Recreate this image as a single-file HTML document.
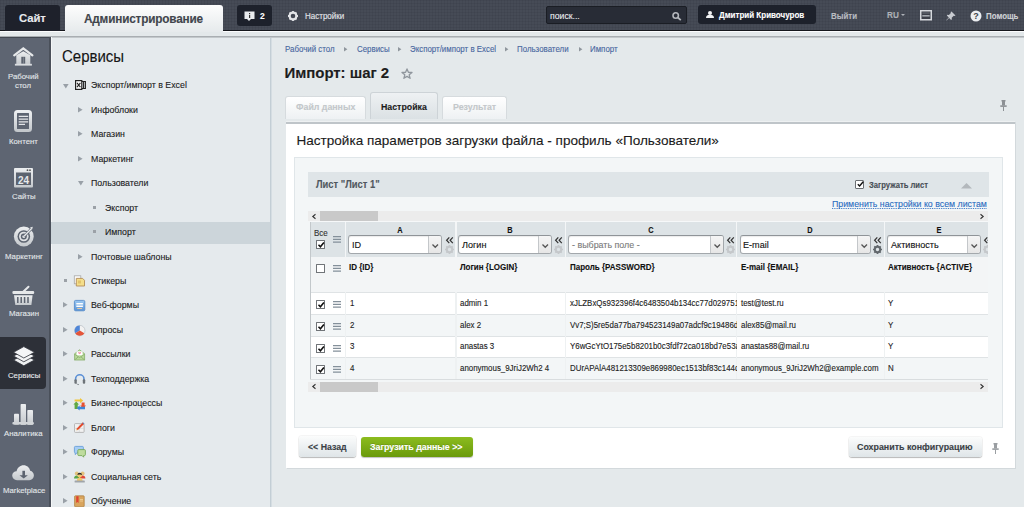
<!DOCTYPE html>
<html><head><meta charset="utf-8">
<style>
*{box-sizing:border-box;margin:0;padding:0}
html,body{width:1024px;height:507px;overflow:hidden;font-family:"Liberation Sans",sans-serif;background:#e4e9eb;position:relative}
.a{position:absolute}
.t{position:absolute;white-space:nowrap;-webkit-text-stroke:0.12px}
svg{overflow:visible}
</style></head><body>
<div class="a" style="left:0px;top:0px;width:1024px;height:31px;background:#464b56;border-bottom:1px solid #15171c"></div>
<div class="a" style="left:0px;top:0px;width:1024px;height:30px;background-image:linear-gradient(90deg,rgba(0,0,0,.05) 1px,transparent 1px),linear-gradient(rgba(0,0,0,.05) 1px,transparent 1px);background-size:3px 3px"></div>
<div class="a" style="left:0px;top:31px;width:1024px;height:1px;background:#fafbfc"></div>
<div class="a" style="left:0px;top:32px;width:1024px;height:4px;background:#e3e8ea"></div>
<div class="a" style="left:0px;top:36px;width:1024px;height:1px;background:#a9aeb2"></div>
<div class="a" style="left:0px;top:37px;width:1024px;height:1px;background:#c3c8cb"></div>
<div class="a" style="left:5px;top:5px;width:55px;height:26px;background:#1e212b;border-radius:3px 3px 0 0"></div>
<div class="t" style="left:18.50px;top:11.47px;font-size:11.75px;line-height:13.51px;font-weight:bold;color:#e8eaee;transform:scaleX(0.9615);transform-origin:0 0;letter-spacing:-0.1px">Сайт</div>
<div class="a" style="left:65px;top:5px;width:158px;height:27px;background:linear-gradient(#fdfdfd,#e6eaec);border-radius:3px 3px 0 0"></div>
<div class="t" style="left:84.00px;top:11.69px;font-size:12.27px;line-height:14.11px;font-weight:bold;color:#41454c;transform:scaleX(0.9615);transform-origin:0 0;letter-spacing:-0.2px">Администрирование</div>
<div class="a" style="left:237px;top:5px;width:35px;height:21px;background:#1d212b;border-radius:3px"></div>
<svg class="a" style="left:244px;top:11px" width="11" height="11" viewBox="0 0 11 11"><path d="M0.5 0.5h10v7.5h-3.5l-2 2-2-2h-2.5z" fill="#e9ebee"/><rect x="5" y="2" width="1.2" height="1.2" fill="#333"/><rect x="5" y="4" width="1.2" height="3" fill="#333"/></svg>
<div class="t" style="left:259.50px;top:10.73px;font-size:9.52px;line-height:10.95px;font-weight:bold;color:#fff;transform:scaleX(0.8929);transform-origin:0 0;">2</div>
<svg class="a" style="left:288px;top:11px" width="10" height="10" viewBox="0 0 10 10"><circle cx="5" cy="5" r="3.4" fill="none" stroke="#e3e5e8" stroke-width="2.2"/><g stroke="#e3e5e8" stroke-width="1.8"><path d="M5 0v2M5 8v2M0 5h2M8 5h2M1.5 1.5l1.4 1.4M7.1 7.1l1.4 1.4M1.5 8.5l1.4-1.4M7.1 2.9l1.4-1.4"/></g></svg>
<div class="t" style="left:304.50px;top:10.74px;font-size:8.96px;line-height:10.30px;font-weight:normal;color:#e6e8eb;transform:scaleX(0.8929);transform-origin:0 0;">Настройки</div>
<div class="a" style="left:546px;top:6px;width:141px;height:18px;background:#282c36;border:1px solid #1a1d24;border-radius:2px"></div>
<div class="t" style="left:550.00px;top:10.02px;font-size:9.74px;line-height:11.21px;font-weight:normal;color:#e9ebef;transform:scaleX(0.8929);transform-origin:0 0;">поиск...</div>
<svg class="a" style="left:672px;top:12px" width="10" height="8" viewBox="0 0 10 8"><circle cx="3.7" cy="3.5" r="2.7" fill="none" stroke="#b4b7bc" stroke-width="1.6"/><path d="M5.8 5.5l3 2.6" stroke="#b4b7bc" stroke-width="1.8"/></svg>
<div class="a" style="left:698px;top:5px;width:118px;height:19px;background:#1d212b;border-radius:3px"></div>
<svg class="a" style="left:706px;top:11px" width="8" height="7" viewBox="0 0 8 7"><circle cx="4" cy="2" r="2" fill="#f2f3f5"/><path d="M0 7c0-2.5 1.5-3.3 4-3.3s4 .8 4 3.3z" fill="#f2f3f5"/></svg>
<div class="t" style="left:719.00px;top:10.24px;font-size:8.96px;line-height:10.30px;font-weight:bold;color:#fff;transform:scaleX(0.8929);transform-origin:0 0;">Дмитрий Кривочуров</div>
<div class="t" style="left:831.00px;top:10.65px;font-size:8.85px;line-height:10.18px;font-weight:bold;color:#b9bcc1;transform:scaleX(0.8929);transform-origin:0 0;">Выйти</div>
<div class="t" style="left:887.00px;top:10.34px;font-size:9.18px;line-height:10.56px;font-weight:bold;color:#adb1b7;transform:scaleX(0.8929);transform-origin:0 0;">RU</div>
<svg class="a" style="left:901px;top:14px" width="4" height="2" viewBox="0 0 4 2"><path d="M0 0h4l-2 2z" fill="#adb1b7"/></svg>
<svg class="a" style="left:920px;top:10px" width="12" height="10.5" viewBox="0 0 12 10.5"><rect x="0.75" y="0.75" width="10.5" height="9" fill="#3b3f48" stroke="#d5d8dc" stroke-width="1.5"/><rect x="2.3" y="5" width="7.4" height="1.6" fill="#a3a8ae"/><rect x="2.3" y="2.5" width="7.4" height="1" fill="#6d727a"/></svg>
<svg class="a" style="left:946px;top:11px" width="10" height="9" viewBox="0 0 10 9"><path d="M5.5 0.5l4 4-1 .6-.8-.3-2 2 .2 1.4-.8.7-2-2L.5 9.5l-.3-.3 2.6-2.7-2-2 .7-.8 1.4.2 2-2-.3-.8z" fill="#c9ccd1"/></svg>
<svg class="a" style="left:970px;top:10px" width="12" height="12" viewBox="0 0 12 12"><circle cx="6" cy="6" r="5.5" fill="#eceef1"/><text x="6" y="9.2" font-family="Liberation Sans" font-weight="bold" font-size="9" text-anchor="middle" fill="#3f434b">?</text></svg>
<div class="t" style="left:985.50px;top:10.65px;font-size:8.85px;line-height:10.18px;font-weight:bold;color:#cfd2d6;transform:scaleX(0.8929);transform-origin:0 0;">Помощь</div>
<div class="a" style="left:0px;top:37px;width:50px;height:470px;background:#5e6572"></div>
<div class="a" style="left:0px;top:37px;width:50px;height:1px;background:#434952"></div>
<div class="a" style="left:49px;top:37px;width:2px;height:470px;background:#4a505a"></div>
<div class="a" style="left:51px;top:37px;width:1px;height:470px;background:#f4f6f7"></div>
<div class="a" style="left:0px;top:337px;width:46px;height:52px;background:#2d3038;border-radius:0 4px 4px 0"></div>
<svg class="a" style="left:13px;top:47px" width="21" height="19" viewBox="0 0 21 19"><defs><linearGradient id="lg" x1="0" y1="0" x2="0" y2="1"><stop offset="0" stop-color="#eceef0"/><stop offset="1" stop-color="#c4c8cc"/></linearGradient></defs><path d="M3.3 8.2L10.3 4.2 17.3 8.2V17.5H3.3Z" fill="url(#lg)"/><path d="M1.2 8.4L10.3 1.3 19.4 8.4" fill="none" stroke="#e6e8ea" stroke-width="2.2" stroke-linecap="round"/><rect x="8.3" y="9.8" width="3.9" height="7" fill="#5c636f"/><rect x="10" y="10.3" width="0.7" height="6.5" fill="#8a9099"/><rect x="1.9" y="16.8" width="17" height="1.8" fill="#d9dcdf"/></svg>
<div class="t" style="left:8.30px;top:72.32px;font-size:8.11px;line-height:9.33px;font-weight:normal;color:#e2e5e9;transform:scaleX(0.9615);transform-origin:0 0;">Рабочий</div>
<div class="t" style="left:15.00px;top:80.62px;font-size:8.11px;line-height:9.33px;font-weight:normal;color:#e2e5e9;transform:scaleX(0.9615);transform-origin:0 0;">стол</div>
<svg class="a" style="left:14px;top:110px" width="18" height="22" viewBox="0 0 18 22"><defs><linearGradient id="lg" x1="0" y1="0" x2="0" y2="1"><stop offset="0" stop-color="#eceef0"/><stop offset="1" stop-color="#c4c8cc"/></linearGradient></defs><rect x="1.5" y="1.5" width="15" height="19" rx="2" fill="none" stroke="url(#lg)" stroke-width="3"/><path d="M4.7 6.4h9.5M4.7 9.2h9.5M4.7 11.8h9.5M4.7 14.4h6.3" stroke="#e3e5e8" stroke-width="1.3"/></svg>
<div class="t" style="left:8.70px;top:136.52px;font-size:8.11px;line-height:9.33px;font-weight:normal;color:#e2e5e9;transform:scaleX(0.9615);transform-origin:0 0;">Контент</div>
<svg class="a" style="left:14px;top:167.5px" width="19" height="19.5" viewBox="0 0 19 19.5"><defs><linearGradient id="lg" x1="0" y1="0" x2="0" y2="1"><stop offset="0" stop-color="#eceef0"/><stop offset="1" stop-color="#c4c8cc"/></linearGradient></defs><rect x="0" y="0" width="19" height="19.5" rx="1" fill="url(#lg)"/><rect x="2" y="4.5" width="15" height="12.5" fill="#5c636f"/><circle cx="13.5" cy="2.2" r="0.9" fill="#555"/><circle cx="16" cy="2.2" r="0.9" fill="#555"/><text x="9.5" y="15.5" font-family="Liberation Sans" font-weight="bold" font-size="10" text-anchor="middle" fill="#e6e8ea">24</text></svg>
<div class="t" style="left:12.00px;top:191.72px;font-size:8.11px;line-height:9.33px;font-weight:normal;color:#e2e5e9;transform:scaleX(0.9615);transform-origin:0 0;">Сайты</div>
<svg class="a" style="left:13px;top:226px" width="22" height="21" viewBox="0 0 22 21"><defs><linearGradient id="lg" x1="0" y1="0" x2="0" y2="1"><stop offset="0" stop-color="#eceef0"/><stop offset="1" stop-color="#c4c8cc"/></linearGradient></defs><circle cx="10.8" cy="10.5" r="9.9" fill="url(#lg)"/><circle cx="10.8" cy="10.5" r="6.3" fill="#5c636f"/><circle cx="10.8" cy="10.5" r="4.8" fill="#dfe1e4"/><circle cx="10.8" cy="10.5" r="3" fill="#5c636f"/><circle cx="10.8" cy="10.5" r="1.5" fill="#dfe1e4"/><path d="M11 10.3L18.8 2.3" stroke="#5c636f" stroke-width="2.6"/><path d="M11 10.3L18.6 2.5" stroke="#e6e8ea" stroke-width="1.4"/><path d="M17 1.5l2.8-.8-.7 2.8z" fill="#e6e8ea"/></svg>
<div class="t" style="left:4.80px;top:252.02px;font-size:8.11px;line-height:9.33px;font-weight:normal;color:#e2e5e9;transform:scaleX(0.9615);transform-origin:0 0;">Маркетинг</div>
<svg class="a" style="left:12px;top:286px" width="23" height="20" viewBox="0 0 23 20"><defs><linearGradient id="lg" x1="0" y1="0" x2="0" y2="1"><stop offset="0" stop-color="#eceef0"/><stop offset="1" stop-color="#c4c8cc"/></linearGradient></defs><path d="M11.5 5.5L16.5 0.8" stroke="#e6e8ea" stroke-width="2" stroke-linecap="round"/><rect x="0.4" y="5" width="21.8" height="3" rx="1.2" fill="#e6e8ea"/><path d="M2 9.2H20.6L19.4 19H3.3Z" fill="url(#lg)"/><path d="M5.8 11v6M9.2 11v6M12.6 11v6M16 11v6" stroke="#5c636f" stroke-width="1.5"/></svg>
<div class="t" style="left:8.70px;top:309.32px;font-size:8.11px;line-height:9.33px;font-weight:normal;color:#e2e5e9;transform:scaleX(0.9615);transform-origin:0 0;">Магазин</div>
<svg class="a" style="left:13px;top:346px" width="22" height="20" viewBox="0 0 22 20"><path d="M0.5 14L10.8 8.5 21.5 14 10.8 19.8Z" fill="#eef0f2" stroke="#2d3038" stroke-width="0.8"/><path d="M0.5 10L10.8 4.5 21.5 10 10.8 15.8Z" fill="#f2f3f5" stroke="#2d3038" stroke-width="0.8"/><path d="M0.5 6.3L10.8 0.6 21.5 6.3 10.8 12Z" fill="#f4f5f7" stroke="#2d3038" stroke-width="0.8"/></svg>
<div class="t" style="left:7.60px;top:370.92px;font-size:8.11px;line-height:9.33px;font-weight:normal;color:#e8eaee;transform:scaleX(0.9615);transform-origin:0 0;">Сервисы</div>
<svg class="a" style="left:12px;top:403px" width="22" height="22" viewBox="0 0 22 22"><defs><linearGradient id="lg" x1="0" y1="0" x2="0" y2="1"><stop offset="0" stop-color="#eceef0"/><stop offset="1" stop-color="#c4c8cc"/></linearGradient></defs><rect x="2" y="10.8" width="5" height="11" rx="0.8" fill="url(#lg)"/><rect x="8.6" y="1" width="5.4" height="21" rx="0.8" fill="url(#lg)"/><rect x="15.3" y="7" width="5.7" height="15" rx="0.8" fill="url(#lg)"/><rect x="0.4" y="19" width="21.5" height="2.6" rx="1" fill="#d2d5d8"/></svg>
<div class="t" style="left:3.90px;top:429.42px;font-size:8.11px;line-height:9.33px;font-weight:normal;color:#e2e5e9;transform:scaleX(0.9615);transform-origin:0 0;">Аналитика</div>
<svg class="a" style="left:12px;top:465px" width="22" height="16" viewBox="0 0 22 16"><defs><linearGradient id="lg" x1="0" y1="0" x2="0" y2="1"><stop offset="0" stop-color="#eceef0"/><stop offset="1" stop-color="#c4c8cc"/></linearGradient></defs><path d="M5 15.2C2.2 15.2 0.2 13.2 0.2 10.6 0.2 8 2.2 6.2 4.6 6.2 5.3 2.6 8.2 0.2 11.6 0.2 15 0.2 17.6 2.6 18.2 5.8 20.3 6.3 21.9 8.2 21.9 10.6 21.9 13.2 19.9 15.2 17.3 15.2Z" fill="url(#lg)"/><rect x="10.4" y="5.8" width="2.6" height="5.5" fill="#5c636f"/><path d="M7.5 10.2H15.9L11.7 13.6Z" fill="#5c636f"/></svg>
<div class="t" style="left:2.60px;top:486.32px;font-size:8.11px;line-height:9.33px;font-weight:normal;color:#e2e5e9;transform:scaleX(0.9615);transform-origin:0 0;">Marketplace</div>
<div class="a" style="left:52px;top:38px;width:218px;height:469px;background:#e5eaed"></div>
<div class="a" style="left:270px;top:38px;width:1px;height:469px;background:#c3ced5"></div>
<div class="a" style="left:271px;top:38px;width:1px;height:469px;background:#d5dde2"></div>
<div class="t" style="left:61.50px;top:46.67px;font-size:16.20px;line-height:18.63px;font-weight:normal;color:#151515;transform:scaleX(0.9259);transform-origin:0 0;">Сервисы</div>
<svg class="a" style="left:63px;top:84.39999999999999px" width="6" height="5" viewBox="0 0 6 5"><path d="M0 0H5.6L2.8 4.6Z" fill="#99a0a7"/></svg>
<svg class="a" style="left:75px;top:80px" width="11" height="10" viewBox="0 0 11 10"><rect x="0.6" y="0.6" width="6.2" height="8.8" fill="#fff" stroke="#222" stroke-width="1.2"/><path d="M2 2.8l3.4 4.4M5.4 2.8L2 7.2" stroke="#222" stroke-width="1.1"/><path d="M6.8 1.5h3.6v7h-3.6M8.6 1.5v7" fill="none" stroke="#222" stroke-width="1.1"/></svg>
<div class="t" style="left:91.00px;top:79.32px;font-size:9.86px;line-height:11.33px;font-weight:normal;color:#1b1b1b;transform:scaleX(0.8929);transform-origin:0 0;">Экспорт/импорт в Excel</div>
<svg class="a" style="left:78px;top:106.76px" width="5" height="6" viewBox="0 0 5 6"><path d="M0 0L4.6 2.8 0 5.6Z" fill="#99a0a7"/></svg>
<div class="t" style="left:90.50px;top:103.78px;font-size:9.86px;line-height:11.33px;font-weight:normal;color:#1b1b1b;transform:scaleX(0.8929);transform-origin:0 0;">Инфоблоки</div>
<svg class="a" style="left:78px;top:131.21999999999997px" width="5" height="6" viewBox="0 0 5 6"><path d="M0 0L4.6 2.8 0 5.6Z" fill="#99a0a7"/></svg>
<div class="t" style="left:90.50px;top:128.24px;font-size:9.86px;line-height:11.33px;font-weight:normal;color:#1b1b1b;transform:scaleX(0.8929);transform-origin:0 0;">Магазин</div>
<svg class="a" style="left:78px;top:155.67999999999998px" width="5" height="6" viewBox="0 0 5 6"><path d="M0 0L4.6 2.8 0 5.6Z" fill="#99a0a7"/></svg>
<div class="t" style="left:90.50px;top:152.70px;font-size:9.86px;line-height:11.33px;font-weight:normal;color:#1b1b1b;transform:scaleX(0.8929);transform-origin:0 0;">Маркетинг</div>
<svg class="a" style="left:77.8px;top:181.44px" width="6" height="5" viewBox="0 0 6 5"><path d="M0 0H5.6L2.8 4.6Z" fill="#99a0a7"/></svg>
<div class="t" style="left:90.50px;top:177.16px;font-size:9.86px;line-height:11.33px;font-weight:normal;color:#1b1b1b;transform:scaleX(0.8929);transform-origin:0 0;">Пользователи</div>
<div class="a" style="left:51px;top:222px;width:219px;height:22px;background:#ccd5da"></div>
<div class="a" style="left:92.6px;top:206px;width:3px;height:3px;background:#9ba1a7"></div>
<div class="t" style="left:104.70px;top:201.62px;font-size:9.86px;line-height:11.33px;font-weight:normal;color:#1b1b1b;transform:scaleX(0.8929);transform-origin:0 0;">Экспорт</div>
<div class="a" style="left:92.6px;top:230px;width:3px;height:3px;background:#9ba1a7"></div>
<div class="t" style="left:104.70px;top:226.08px;font-size:9.86px;line-height:11.33px;font-weight:normal;color:#1b1b1b;transform:scaleX(0.8929);transform-origin:0 0;">Импорт</div>
<svg class="a" style="left:78px;top:253.51999999999998px" width="5" height="6" viewBox="0 0 5 6"><path d="M0 0L4.6 2.8 0 5.6Z" fill="#99a0a7"/></svg>
<div class="t" style="left:90.50px;top:250.54px;font-size:9.86px;line-height:11.33px;font-weight:normal;color:#1b1b1b;transform:scaleX(0.8929);transform-origin:0 0;">Почтовые шаблоны</div>
<div class="a" style="left:63.8px;top:279px;width:3px;height:3px;background:#9ba1a7"></div>
<svg class="a" style="left:74px;top:275px" width="12" height="12" viewBox="0 0 12 12"><rect x="0.3" y="0.8" width="6.5" height="8" fill="#fafafa" stroke="#a8a8a8" stroke-width="0.8"/><path d="M2.3 3.4H8.6L10.5 5.3V11H2.3Z" fill="#f4de8a" stroke="#b38d58" stroke-width="0.9"/><rect x="4" y="5.5" width="3" height="3" fill="#e2c36a"/></svg>
<div class="t" style="left:91.00px;top:275.00px;font-size:9.86px;line-height:11.33px;font-weight:normal;color:#1b1b1b;transform:scaleX(0.8929);transform-origin:0 0;">Стикеры</div>
<svg class="a" style="left:63.3px;top:302.44px" width="5" height="6" viewBox="0 0 5 6"><path d="M0 0L4.6 2.8 0 5.6Z" fill="#99a0a7"/></svg>
<svg class="a" style="left:74px;top:300px" width="12" height="12" viewBox="0 0 12 12"><defs><linearGradient id="gb" x1="0" y1="0" x2="0" y2="1"><stop offset="0" stop-color="#9cc9f2"/><stop offset="1" stop-color="#5b94d6"/></linearGradient></defs><rect x="0.4" y="0.4" width="10.4" height="10.4" rx="1.2" fill="url(#gb)" stroke="#4f86c6" stroke-width="0.8"/><rect x="2.3" y="3" width="6.6" height="1.5" fill="#fff"/><rect x="2.3" y="5.5" width="6.6" height="1.5" fill="#fff"/><rect x="3.2" y="8" width="4.8" height="1" fill="#e8c9a0"/></svg>
<div class="t" style="left:91.00px;top:299.46px;font-size:9.86px;line-height:11.33px;font-weight:normal;color:#1b1b1b;transform:scaleX(0.8929);transform-origin:0 0;">Веб-формы</div>
<svg class="a" style="left:63.3px;top:326.90000000000003px" width="5" height="6" viewBox="0 0 5 6"><path d="M0 0L4.6 2.8 0 5.6Z" fill="#99a0a7"/></svg>
<svg class="a" style="left:74px;top:324px" width="12" height="12" viewBox="0 0 12 12"><circle cx="5.8" cy="6.6" r="5.2" fill="#f2f2f2" stroke="#b9bec3" stroke-width="0.7"/><path d="M5.8 6.6V1.4A5.2 5.2 0 0 0 1.3 9.2Z" fill="#4f86d8"/><path d="M5.8 6.6L1.3 9.2A5.2 5.2 0 0 0 10.3 9.2Z" fill="#e4553a"/></svg>
<div class="t" style="left:91.00px;top:323.92px;font-size:9.86px;line-height:11.33px;font-weight:normal;color:#1b1b1b;transform:scaleX(0.8929);transform-origin:0 0;">Опросы</div>
<svg class="a" style="left:63.3px;top:351.35999999999996px" width="5" height="6" viewBox="0 0 5 6"><path d="M0 0L4.6 2.8 0 5.6Z" fill="#99a0a7"/></svg>
<svg class="a" style="left:74px;top:349px" width="12" height="12" viewBox="0 0 12 12"><path d="M0.6 4.8L5.6 0.8 10.6 4.8V11H0.6Z" fill="#b9d99b" stroke="#86ad68" stroke-width="0.8"/><rect x="2.6" y="2.3" width="6" height="4" fill="#fff"/><path d="M4.2 3.3c.6-.6 1.4-.3 1.4.3 0-.6.8-.9 1.4-.3.5.6-.4 1.4-1.4 2-1-.6-1.9-1.4-1.4-2z" fill="#f19bb0"/><path d="M0.6 5.2L5.6 8.6 10.6 5.2M0.6 11L4.3 7.8M10.6 11L6.9 7.8" fill="none" stroke="#86ad68" stroke-width="0.8"/></svg>
<div class="t" style="left:91.00px;top:348.38px;font-size:9.86px;line-height:11.33px;font-weight:normal;color:#1b1b1b;transform:scaleX(0.8929);transform-origin:0 0;">Рассылки</div>
<svg class="a" style="left:63.3px;top:375.82px" width="5" height="6" viewBox="0 0 5 6"><path d="M0 0L4.6 2.8 0 5.6Z" fill="#99a0a7"/></svg>
<svg class="a" style="left:74px;top:373px" width="12" height="12" viewBox="0 0 12 12"><path d="M1.6 7.5V6A4.2 4.2 0 0 1 10 6V7.5" fill="none" stroke="#5a8fd6" stroke-width="1.6"/><rect x="0.4" y="6.2" width="2.4" height="4.6" rx="1" fill="#6d7378"/><rect x="8.8" y="6.2" width="2.4" height="4.6" rx="1" fill="#6d7378"/><path d="M2.4 10.5Q3.5 11.8 5 11.6" fill="none" stroke="#6d7378" stroke-width="0.7"/></svg>
<div class="t" style="left:91.00px;top:372.84px;font-size:9.86px;line-height:11.33px;font-weight:normal;color:#1b1b1b;transform:scaleX(0.8929);transform-origin:0 0;">Техподдержка</div>
<svg class="a" style="left:63.3px;top:400.28000000000003px" width="5" height="6" viewBox="0 0 5 6"><path d="M0 0L4.6 2.8 0 5.6Z" fill="#99a0a7"/></svg>
<svg class="a" style="left:74px;top:398px" width="12" height="12" viewBox="0 0 12 12"><path d="M0.6 1.6H6V0L9.2 2.6 6 5.2V3.6H0.6Z" fill="#f2c53a"/><path d="M7.6 4.4H10.6V7.6H12L9.1 10.8 6.2 7.6H7.6Z" fill="#e8502f"/><path d="M0.6 11V6.4H-0.6L2.2 3.4 5 6.4H3.8V11Z" fill="#5fa844"/><path d="M11 11.2H5.6V12.6L2.6 10 5.6 7.4V8.8H11Z" fill="#3e86d8"/></svg>
<div class="t" style="left:91.00px;top:397.30px;font-size:9.86px;line-height:11.33px;font-weight:normal;color:#1b1b1b;transform:scaleX(0.8929);transform-origin:0 0;">Бизнес-процессы</div>
<svg class="a" style="left:63.3px;top:424.73999999999995px" width="5" height="6" viewBox="0 0 5 6"><path d="M0 0L4.6 2.8 0 5.6Z" fill="#99a0a7"/></svg>
<svg class="a" style="left:74px;top:422px" width="12" height="12" viewBox="0 0 12 12"><rect x="0.5" y="1.6" width="9.6" height="8.8" rx="0.8" fill="#f1f1f1" stroke="#a9a9a9" stroke-width="0.8"/><path d="M5.3 1.6V10.4M0.5 6.4H10.1" stroke="#d0d0d0" stroke-width="0.6"/><path d="M3 7.6L9.6 1" stroke="#e24a2c" stroke-width="2"/><path d="M9 0.4l1.4 1.2-0.7 0.7-1.3-1.2z" fill="#4b8fd8"/><path d="M2.2 8.4l0.6-1.4 0.9 0.8z" fill="#f0c040"/></svg>
<div class="t" style="left:91.00px;top:421.76px;font-size:9.86px;line-height:11.33px;font-weight:normal;color:#1b1b1b;transform:scaleX(0.8929);transform-origin:0 0;">Блоги</div>
<svg class="a" style="left:63.3px;top:449.2px" width="5" height="6" viewBox="0 0 5 6"><path d="M0 0L4.6 2.8 0 5.6Z" fill="#99a0a7"/></svg>
<svg class="a" style="left:74px;top:446px" width="12" height="12" viewBox="0 0 12 12"><path d="M1.4 0.4H8.4A1 1 0 0 1 9.4 1.4V5.8A1 1 0 0 1 8.4 6.8H3L1.2 8.6V6.8A1 1 0 0 1 0.4 5.8V1.4A1 1 0 0 1 1.4 0.4Z" fill="#a6cdf4" stroke="#5d97d6" stroke-width="0.8"/><path d="M4.8 3.6H10.4A1 1 0 0 1 11.4 4.6V8.6A1 1 0 0 1 10.4 9.6H9.6V11.2L8 9.6H4.8A1 1 0 0 1 3.8 8.6V4.6A1 1 0 0 1 4.8 3.6Z" fill="#bfdc9e" stroke="#6ea34e" stroke-width="0.8"/></svg>
<div class="t" style="left:91.00px;top:446.22px;font-size:9.86px;line-height:11.33px;font-weight:normal;color:#1b1b1b;transform:scaleX(0.8929);transform-origin:0 0;">Форумы</div>
<svg class="a" style="left:63.3px;top:473.66px" width="5" height="6" viewBox="0 0 5 6"><path d="M0 0L4.6 2.8 0 5.6Z" fill="#99a0a7"/></svg>
<svg class="a" style="left:74px;top:471px" width="12" height="12" viewBox="0 0 12 12"><circle cx="2.8" cy="2.4" r="2" fill="#e3c27e"/><circle cx="8.6" cy="2.4" r="2" fill="#e3c27e"/><path d="M0 7.5c0-2 1.2-3 2.8-3s2.8 1 2.8 3z" fill="#5aa447"/><path d="M5.8 7.5c0-2 1.2-3 2.8-3s2.8 1 2.8 3z" fill="#e04a3a"/><circle cx="5.7" cy="4.3" r="2.3" fill="#f2c86e"/><path d="M3.4 4.1a2.3 2.3 0 0 1 4.6 0c-.8-.9-3.8-.9-4.6 0z" fill="#2e2e2e"/><path d="M2.8 10c0-2.4 1.2-3.3 2.9-3.3s2.9.9 2.9 3.3z" fill="#f2c86e"/><rect x="0.6" y="9.4" width="10.2" height="2.2" rx="0.6" fill="#a0a5aa"/></svg>
<div class="t" style="left:91.00px;top:470.68px;font-size:9.86px;line-height:11.33px;font-weight:normal;color:#1b1b1b;transform:scaleX(0.8929);transform-origin:0 0;">Социальная сеть</div>
<svg class="a" style="left:63.3px;top:498.11999999999995px" width="5" height="6" viewBox="0 0 5 6"><path d="M0 0L4.6 2.8 0 5.6Z" fill="#99a0a7"/></svg>
<svg class="a" style="left:74px;top:495px" width="12" height="12" viewBox="0 0 12 12"><rect x="0.6" y="0.8" width="9.6" height="11" rx="0.8" fill="#d9a55e" stroke="#a9783a" stroke-width="0.7"/><path d="M2.2 1.2V8l1.2-1 1.2 1V1.2z" fill="#e0432f"/><path d="M6 4.5h3M6 6h3" stroke="#f3d29b" stroke-width="0.8"/></svg>
<div class="t" style="left:91.00px;top:495.14px;font-size:9.86px;line-height:11.33px;font-weight:normal;color:#1b1b1b;transform:scaleX(0.8929);transform-origin:0 0;">Обучение</div>
<div class="a" style="left:272px;top:38px;width:752px;height:469px;background:#e4e9eb"></div>
<div class="t" style="left:285.00px;top:43.85px;font-size:8.85px;line-height:10.18px;font-weight:normal;color:#4867a0;transform:scaleX(0.8929);transform-origin:0 0;">Рабочий стол</div>
<svg class="a" style="left:344px;top:47.0px" width="4" height="5" viewBox="0 0 4 5"><path d="M0 0L3.4 2.2 0 4.4Z" fill="#8f969d"/></svg>
<div class="t" style="left:356.60px;top:43.85px;font-size:8.85px;line-height:10.18px;font-weight:normal;color:#4867a0;transform:scaleX(0.8929);transform-origin:0 0;">Сервисы</div>
<svg class="a" style="left:398px;top:47.0px" width="4" height="5" viewBox="0 0 4 5"><path d="M0 0L3.4 2.2 0 4.4Z" fill="#8f969d"/></svg>
<div class="t" style="left:410.30px;top:43.85px;font-size:8.85px;line-height:10.18px;font-weight:normal;color:#4867a0;transform:scaleX(0.8929);transform-origin:0 0;">Экспорт/импорт в Excel</div>
<svg class="a" style="left:505.3px;top:47.0px" width="4" height="5" viewBox="0 0 4 5"><path d="M0 0L3.4 2.2 0 4.4Z" fill="#8f969d"/></svg>
<div class="t" style="left:516.70px;top:43.85px;font-size:8.85px;line-height:10.18px;font-weight:normal;color:#4867a0;transform:scaleX(0.8929);transform-origin:0 0;">Пользователи</div>
<svg class="a" style="left:578.5px;top:47.0px" width="4" height="5" viewBox="0 0 4 5"><path d="M0 0L3.4 2.2 0 4.4Z" fill="#8f969d"/></svg>
<div class="t" style="left:589.90px;top:43.85px;font-size:8.85px;line-height:10.18px;font-weight:normal;color:#4867a0;transform:scaleX(0.8929);transform-origin:0 0;">Импорт</div>
<div class="t" style="left:284.50px;top:64.38px;font-size:15.00px;line-height:17.25px;font-weight:bold;color:#1d1d1d;letter-spacing:-0.05px">Импорт: шаг 2</div>
<svg class="a" style="left:401px;top:68px" width="12" height="11" viewBox="0 0 12 11"><path d="M6 0.9L7.4 4.3 11 4.5 8.2 6.8 9.1 10.3 6 8.4 2.9 10.3 3.8 6.8 1 4.5 4.6 4.3Z" fill="none" stroke="#8f969d" stroke-width="1.3" stroke-linejoin="round"/></svg>
<svg class="a" style="left:1000px;top:100px" width="7" height="11" viewBox="0 0 7 11"><rect x="1.5" y="0" width="4" height="1.5" fill="#8c9094"/><rect x="2" y="1" width="3" height="4.5" fill="#8c9094"/><rect x="0.3" y="5.3" width="6.4" height="1.6" fill="#8c9094"/><rect x="3" y="6.5" width="1" height="4.5" fill="#8c9094"/></svg>
<div class="a" style="left:285px;top:96px;width:81px;height:23px;background:linear-gradient(#ffffff,#eef1f3);border:1px solid #d6dbde;border-bottom:none;border-radius:3px 3px 0 0"></div>
<div class="t" style="left:296.00px;top:101.12px;font-size:9.86px;line-height:11.33px;font-weight:bold;color:#c3c7ca;transform:scaleX(0.8929);transform-origin:0 0;">Файл данных</div>
<div class="a" style="left:370px;top:92px;width:68px;height:27px;background:linear-gradient(#eef1f3,#dbe1e4);border:1px solid #cdd3d7;border-bottom:none;border-radius:3px 3px 0 0"></div>
<div class="t" style="left:380.50px;top:101.12px;font-size:9.86px;line-height:11.33px;font-weight:bold;color:#1b1b1b;transform:scaleX(0.8929);transform-origin:0 0;">Настройка</div>
<div class="a" style="left:442px;top:96px;width:65px;height:23px;background:linear-gradient(#ffffff,#eef1f3);border:1px solid #d6dbde;border-bottom:none;border-radius:3px 3px 0 0"></div>
<div class="t" style="left:452.50px;top:101.12px;font-size:9.86px;line-height:11.33px;font-weight:bold;color:#c3c7ca;transform:scaleX(0.8929);transform-origin:0 0;">Результат</div>
<div class="a" style="left:286px;top:121px;width:729px;height:347px;background:#fff;border-top:3px solid #bfc5c9;box-shadow:1px 1px 0 #d3d9dc"></div>
<div class="a" style="left:286px;top:121px;width:729px;height:1px;background:#eef1f2"></div>
<div class="t" style="left:296.50px;top:133.01px;font-size:13.55px;line-height:15.58px;font-weight:normal;color:#1b1b1b;">Настройка параметров загрузки файла - профиль «Пользователи»</div>
<div class="a" style="left:294px;top:157px;width:709px;height:271px;background:#f3f6f7;border:1px solid #e0e6e9"></div>
<div class="a" style="left:308px;top:172px;width:681px;height:25px;background:#dfe5e8"></div>
<div class="t" style="left:316.00px;top:177.90px;font-size:10.53px;line-height:12.11px;font-weight:bold;color:#50575e;transform:scaleX(0.8929);transform-origin:0 0;">Лист "Лист 1"</div>
<div class="a" style="left:855px;top:179.5px;width:9px;height:9px;background:#fff;border:1px solid #6b6f73;border-radius:1px"></div>
<svg class="a" style="left:856.5px;top:181px" width="7" height="6" viewBox="0 0 7 6"><path d="M0.8 3.2L2.6 5 6.2 0.8" fill="none" stroke="#111" stroke-width="1.4"/></svg>
<div class="t" style="left:868.80px;top:180.90px;font-size:8.57px;line-height:9.85px;font-weight:bold;color:#474e55;transform:scaleX(0.8929);transform-origin:0 0;">Загружать лист</div>
<svg class="a" style="left:961px;top:183px" width="11" height="5.5" viewBox="0 0 11 5.5"><path d="M0 5.5L5.5 0 11 5.5Z" fill="#b3b8bc"/></svg>
<div class="t" style="left:832.40px;top:198.72px;font-size:9.86px;line-height:11.33px;font-weight:normal;color:#2a6bc0;transform:scaleX(0.8929);transform-origin:0 0;border-bottom:1px dotted #2a6bc0;line-height:9px">Применить настройки ко всем листам</div>
<div class="a" style="left:308px;top:211px;width:680px;height:10px;background:#ececec"></div>
<div class="a" style="left:320px;top:211px;width:58px;height:10px;background:#c9c9c9"></div>
<svg class="a" style="left:311.5px;top:213.5px" width="4" height="5" viewBox="0 0 4 5"><path d="M3.5 0.3L0.8 2.5 3.5 4.7" fill="none" stroke="#333" stroke-width="1.1"/></svg>
<svg class="a" style="left:980px;top:213.5px" width="4" height="5" viewBox="0 0 4 5"><path d="M0.5 0.3L3.2 2.5 0.5 4.7" fill="none" stroke="#333" stroke-width="1.1"/></svg>
<div class="a" style="left:308px;top:381.5px;width:680px;height:10px;background:#ececec"></div>
<div class="a" style="left:320px;top:381.5px;width:58px;height:10px;background:#c9c9c9"></div>
<svg class="a" style="left:311.5px;top:384.0px" width="4" height="5" viewBox="0 0 4 5"><path d="M3.5 0.3L0.8 2.5 3.5 4.7" fill="none" stroke="#333" stroke-width="1.1"/></svg>
<svg class="a" style="left:980px;top:384.0px" width="4" height="5" viewBox="0 0 4 5"><path d="M0.5 0.3L3.2 2.5 0.5 4.7" fill="none" stroke="#333" stroke-width="1.1"/></svg>
<div class="a" style="left:310px;top:221px;width:678px;height:1px;background:#f6f8f9"></div>
<div class="a" style="left:310px;top:222px;width:678px;height:35px;background:#dde3e6"></div>
<div class="a" style="left:310px;top:257px;width:678px;height:35px;background:#f3f5f6"></div>
<div class="a" style="left:310px;top:292px;width:678px;height:22px;background:#ffffff;border-top:1.5px solid #dfe3e5"></div>
<div class="a" style="left:310px;top:314px;width:678px;height:21.5px;background:#f3f6f7;border-top:1.5px solid #dfe3e5"></div>
<div class="a" style="left:310px;top:335.5px;width:678px;height:21.5px;background:#ffffff;border-top:1.5px solid #dfe3e5"></div>
<div class="a" style="left:310px;top:357px;width:678px;height:21.5px;background:#f3f6f7;border-top:1.5px solid #dfe3e5"></div>
<div class="a" style="left:310px;top:378.5px;width:678px;height:1px;background:#d9dddf"></div>
<div class="a" style="left:310px;top:222px;width:1px;height:157px;background:#c3c8cb"></div>
<div class="a" style="left:344.5px;top:222px;width:1.5px;height:35px;background:#f4f6f7"></div>
<div class="a" style="left:344.5px;top:292px;width:1.5px;height:87px;background:#eef1f2"></div>
<div class="a" style="left:455.0px;top:222px;width:1.5px;height:35px;background:#f4f6f7"></div>
<div class="a" style="left:455.0px;top:292px;width:1.5px;height:87px;background:#eef1f2"></div>
<div class="a" style="left:564.5px;top:222px;width:1.5px;height:35px;background:#f4f6f7"></div>
<div class="a" style="left:564.5px;top:292px;width:1.5px;height:87px;background:#eef1f2"></div>
<div class="a" style="left:735.5px;top:222px;width:1.5px;height:35px;background:#f4f6f7"></div>
<div class="a" style="left:735.5px;top:292px;width:1.5px;height:87px;background:#eef1f2"></div>
<div class="a" style="left:883.5px;top:222px;width:1.5px;height:35px;background:#f4f6f7"></div>
<div class="a" style="left:883.5px;top:292px;width:1.5px;height:87px;background:#eef1f2"></div>
<div class="t" style="left:313.80px;top:228.24px;font-size:8.96px;line-height:10.30px;font-weight:normal;color:#333;transform:scaleX(0.8929);transform-origin:0 0;">Все</div>
<div class="a" style="left:316.3px;top:240px;width:9px;height:9px;background:#fff;border:1px solid #707478;border-radius:0.5px"></div>
<svg class="a" style="left:317.90000000000003px;top:242px" width="6.5" height="5.5" viewBox="0 0 6.5 5.5"><path d="M0.5 2.8L2.4 4.7 5.9 0.6" fill="none" stroke="#111" stroke-width="1.6"/></svg>
<svg class="a" style="left:333px;top:235.5px" width="8" height="7" viewBox="0 0 8 7"><path d="M0 0.6h8M0 3.3h8M0 6h8" stroke="#84909a" stroke-width="1.25"/></svg>
<div class="a" style="left:316.3px;top:264px;width:9px;height:9px;background:#fff;border:1px solid #707478;border-radius:0.5px"></div>
<svg class="a" style="left:333px;top:264.5px" width="8" height="7" viewBox="0 0 8 7"><path d="M0 0.6h8M0 3.3h8M0 6h8" stroke="#84909a" stroke-width="1.25"/></svg>
<div class="a" style="left:310px;top:222px;width:678px;height:35px;overflow:hidden">
<div class="t" style="left:-9.60px;width:200px;text-align:center;top:3.86px;font-size:8.29px;line-height:9.53px;font-weight:bold;color:#111;transform:scaleX(0.8929);">A</div>
<div class="a" style="left:38.19999999999999px;top:13px;width:94.19999999999999px;height:19px;background:#fff;border:1px solid #a3a8ac;border-top-color:#8f9498;border-radius:3px;box-shadow:inset 0 1px 1px rgba(0,0,0,.08)"></div>
<div class="a" style="left:117.89999999999998px;top:14px;width:13.5px;height:17px;background:linear-gradient(#f5f5f5,#e6e6e6);border-left:1px solid #c4c7ca;border-radius:0 2px 2px 0"></div>
<svg class="a" style="left:121.89999999999998px;top:21.5px" width="6.5" height="4" viewBox="0 0 6.5 4"><path d="M0.5 0.5L3.25 3.3 6 0.5" fill="none" stroke="#555" stroke-width="1.3"/></svg>
<div class="t" style="left:41.70px;top:18.08px;font-size:9.46px;line-height:10.88px;font-weight:normal;color:#111;transform:scaleX(0.9615);transform-origin:0 0;">ID</div>
<svg class="a" style="left:135.5px;top:14.699999999999989px" width="7.5" height="6.5" viewBox="0 0 7.5 6.5"><path d="M3.3 0.4L0.6 3.25 3.3 6.1M6.8 0.4L4.1 3.25 6.8 6.1" fill="none" stroke="#333" stroke-width="1.2"/></svg>
<svg class="a" style="left:134.7px;top:23px" width="9" height="9" viewBox="0 0 9 9"><circle cx="4.5" cy="4.5" r="2.7" fill="none" stroke="#c5c8cb" stroke-width="2"/><path d="M4.5 0v2M4.5 7v2M0 4.5h2M7 4.5h2M1.3 1.3l1.4 1.4M6.3 6.3l1.4 1.4M1.3 7.7l1.4-1.4M6.3 2.7l1.4-1.4" stroke="#c5c8cb" stroke-width="1.7"/></svg>
<div class="t" style="left:100.30px;width:200px;text-align:center;top:3.86px;font-size:8.29px;line-height:9.53px;font-weight:bold;color:#111;transform:scaleX(0.8929);">B</div>
<div class="a" style="left:148.2px;top:13px;width:94.09999999999997px;height:19px;background:#fff;border:1px solid #a3a8ac;border-top-color:#8f9498;border-radius:3px;box-shadow:inset 0 1px 1px rgba(0,0,0,.08)"></div>
<div class="a" style="left:227.79999999999995px;top:14px;width:13.5px;height:17px;background:linear-gradient(#f5f5f5,#e6e6e6);border-left:1px solid #c4c7ca;border-radius:0 2px 2px 0"></div>
<svg class="a" style="left:231.79999999999995px;top:21.5px" width="6.5" height="4" viewBox="0 0 6.5 4"><path d="M0.5 0.5L3.25 3.3 6 0.5" fill="none" stroke="#555" stroke-width="1.3"/></svg>
<div class="t" style="left:151.70px;top:18.08px;font-size:9.46px;line-height:10.88px;font-weight:normal;color:#111;transform:scaleX(0.9615);transform-origin:0 0;">Логин</div>
<svg class="a" style="left:245px;top:14.699999999999989px" width="7.5" height="6.5" viewBox="0 0 7.5 6.5"><path d="M3.3 0.4L0.6 3.25 3.3 6.1M6.8 0.4L4.1 3.25 6.8 6.1" fill="none" stroke="#333" stroke-width="1.2"/></svg>
<svg class="a" style="left:244.2px;top:23px" width="9" height="9" viewBox="0 0 9 9"><circle cx="4.5" cy="4.5" r="2.7" fill="none" stroke="#c5c8cb" stroke-width="2"/><path d="M4.5 0v2M4.5 7v2M0 4.5h2M7 4.5h2M1.3 1.3l1.4 1.4M6.3 6.3l1.4 1.4M1.3 7.7l1.4-1.4M6.3 2.7l1.4-1.4" stroke="#c5c8cb" stroke-width="1.7"/></svg>
<div class="t" style="left:241.25px;width:200px;text-align:center;top:3.86px;font-size:8.29px;line-height:9.53px;font-weight:bold;color:#111;transform:scaleX(0.8929);">C</div>
<div class="a" style="left:258.29999999999995px;top:13px;width:156.10000000000002px;height:19px;background:#fff;border:1px solid #a3a8ac;border-top-color:#8f9498;border-radius:3px;box-shadow:inset 0 1px 1px rgba(0,0,0,.08)"></div>
<div class="a" style="left:399.9px;top:14px;width:13.5px;height:17px;background:linear-gradient(#f5f5f5,#e6e6e6);border-left:1px solid #c4c7ca;border-radius:0 2px 2px 0"></div>
<svg class="a" style="left:403.9px;top:21.5px" width="6.5" height="4" viewBox="0 0 6.5 4"><path d="M0.5 0.5L3.25 3.3 6 0.5" fill="none" stroke="#555" stroke-width="1.3"/></svg>
<div class="t" style="left:261.80px;top:18.27px;font-size:9.26px;line-height:10.64px;font-weight:normal;color:#7b7b7b;transform:scaleX(0.9615);transform-origin:0 0;">- выбрать поле -</div>
<svg class="a" style="left:416.6px;top:14.699999999999989px" width="7.5" height="6.5" viewBox="0 0 7.5 6.5"><path d="M3.3 0.4L0.6 3.25 3.3 6.1M6.8 0.4L4.1 3.25 6.8 6.1" fill="none" stroke="#333" stroke-width="1.2"/></svg>
<svg class="a" style="left:415.8px;top:23px" width="9" height="9" viewBox="0 0 9 9"><circle cx="4.5" cy="4.5" r="2.7" fill="none" stroke="#c5c8cb" stroke-width="2"/><path d="M4.5 0v2M4.5 7v2M0 4.5h2M7 4.5h2M1.3 1.3l1.4 1.4M6.3 6.3l1.4 1.4M1.3 7.7l1.4-1.4M6.3 2.7l1.4-1.4" stroke="#c5c8cb" stroke-width="1.7"/></svg>
<div class="t" style="left:400.20px;width:200px;text-align:center;top:3.86px;font-size:8.29px;line-height:9.53px;font-weight:bold;color:#111;transform:scaleX(0.8929);">D</div>
<div class="a" style="left:429.6px;top:13px;width:131.60000000000002px;height:19px;background:#fff;border:1px solid #a3a8ac;border-top-color:#8f9498;border-radius:3px;box-shadow:inset 0 1px 1px rgba(0,0,0,.08)"></div>
<div class="a" style="left:546.7px;top:14px;width:13.5px;height:17px;background:linear-gradient(#f5f5f5,#e6e6e6);border-left:1px solid #c4c7ca;border-radius:0 2px 2px 0"></div>
<svg class="a" style="left:550.7px;top:21.5px" width="6.5" height="4" viewBox="0 0 6.5 4"><path d="M0.5 0.5L3.25 3.3 6 0.5" fill="none" stroke="#555" stroke-width="1.3"/></svg>
<div class="t" style="left:433.10px;top:18.08px;font-size:9.46px;line-height:10.88px;font-weight:normal;color:#111;transform:scaleX(0.9615);transform-origin:0 0;">E-mail</div>
<svg class="a" style="left:563.6px;top:14.699999999999989px" width="7.5" height="6.5" viewBox="0 0 7.5 6.5"><path d="M3.3 0.4L0.6 3.25 3.3 6.1M6.8 0.4L4.1 3.25 6.8 6.1" fill="none" stroke="#333" stroke-width="1.2"/></svg>
<svg class="a" style="left:562.8000000000001px;top:23px" width="9" height="9" viewBox="0 0 9 9"><circle cx="4.5" cy="4.5" r="2.7" fill="none" stroke="#62686d" stroke-width="2"/><path d="M4.5 0v2M4.5 7v2M0 4.5h2M7 4.5h2M1.3 1.3l1.4 1.4M6.3 6.3l1.4 1.4M1.3 7.7l1.4-1.4M6.3 2.7l1.4-1.4" stroke="#62686d" stroke-width="1.7"/></svg>
<div class="t" style="left:529.20px;width:200px;text-align:center;top:3.86px;font-size:8.29px;line-height:9.53px;font-weight:bold;color:#111;transform:scaleX(0.8929);">E</div>
<div class="a" style="left:577.3px;top:13px;width:93.90000000000009px;height:19px;background:#fff;border:1px solid #a3a8ac;border-top-color:#8f9498;border-radius:3px;box-shadow:inset 0 1px 1px rgba(0,0,0,.08)"></div>
<div class="a" style="left:656.7px;top:14px;width:13.5px;height:17px;background:linear-gradient(#f5f5f5,#e6e6e6);border-left:1px solid #c4c7ca;border-radius:0 2px 2px 0"></div>
<svg class="a" style="left:660.7px;top:21.5px" width="6.5" height="4" viewBox="0 0 6.5 4"><path d="M0.5 0.5L3.25 3.3 6 0.5" fill="none" stroke="#555" stroke-width="1.3"/></svg>
<div class="t" style="left:580.80px;top:18.08px;font-size:9.46px;line-height:10.88px;font-weight:normal;color:#111;transform:scaleX(0.9615);transform-origin:0 0;">Активность</div>
<svg class="a" style="left:674px;top:14.699999999999989px" width="7.5" height="6.5" viewBox="0 0 7.5 6.5"><path d="M3.3 0.4L0.6 3.25 3.3 6.1M6.8 0.4L4.1 3.25 6.8 6.1" fill="none" stroke="#333" stroke-width="1.2"/></svg>
<svg class="a" style="left:673.2px;top:23px" width="9" height="9" viewBox="0 0 9 9"><circle cx="4.5" cy="4.5" r="2.7" fill="none" stroke="#c5c8cb" stroke-width="2"/><path d="M4.5 0v2M4.5 7v2M0 4.5h2M7 4.5h2M1.3 1.3l1.4 1.4M6.3 6.3l1.4 1.4M1.3 7.7l1.4-1.4M6.3 2.7l1.4-1.4" stroke="#c5c8cb" stroke-width="1.7"/></svg>
</div>
<div class="t" style="left:349.00px;top:262.04px;font-size:8.96px;line-height:10.30px;font-weight:bold;color:#111;transform:scaleX(0.8929);transform-origin:0 0;">ID {ID}</div>
<div class="t" style="left:459.80px;top:262.04px;font-size:8.96px;line-height:10.30px;font-weight:bold;color:#111;transform:scaleX(0.8929);transform-origin:0 0;">Логин {LOGIN}</div>
<div class="t" style="left:569.90px;top:262.04px;font-size:8.96px;line-height:10.30px;font-weight:bold;color:#111;transform:scaleX(0.8929);transform-origin:0 0;">Пароль {PASSWORD}</div>
<div class="t" style="left:740.80px;top:262.04px;font-size:8.96px;line-height:10.30px;font-weight:bold;color:#111;transform:scaleX(0.8929);transform-origin:0 0;">E-mail {EMAIL}</div>
<div class="t" style="left:887.80px;top:262.04px;font-size:8.96px;line-height:10.30px;font-weight:bold;color:#111;transform:scaleX(0.8929);transform-origin:0 0;">Активность {ACTIVE}</div>
<div class="a" style="left:316.2px;top:300px;width:9px;height:9px;background:#fff;border:1px solid #707478;border-radius:0.5px"></div>
<svg class="a" style="left:317.8px;top:302px" width="6.5" height="5.5" viewBox="0 0 6.5 5.5"><path d="M0.5 2.8L2.4 4.7 5.9 0.6" fill="none" stroke="#111" stroke-width="1.6"/></svg>
<svg class="a" style="left:333px;top:301px" width="8" height="7" viewBox="0 0 8 7"><path d="M0 0.6h8M0 3.3h8M0 6h8" stroke="#84909a" stroke-width="1.25"/></svg>
<div class="t" style="left:349.50px;top:297.85px;font-size:8.85px;line-height:10.18px;font-weight:normal;color:#222;transform:scaleX(0.8929);transform-origin:0 0;">1</div>
<div class="t" style="left:459.70px;top:297.85px;font-size:8.85px;line-height:10.18px;font-weight:normal;color:#222;transform:scaleX(0.8929);transform-origin:0 0;">admin 1</div>
<div class="a" style="left:565px;top:294px;width:171.5px;height:20px;overflow:hidden">
<div class="t" style="left:4.50px;top:3.85px;font-size:8.85px;line-height:10.18px;font-weight:normal;color:#222;transform:scaleX(0.8929);transform-origin:0 0;">xJLZBxQs932396f4c6483504b134cc77d029751</div>
</div>
<div class="t" style="left:741.00px;top:297.85px;font-size:8.85px;line-height:10.18px;font-weight:normal;color:#222;transform:scaleX(0.8929);transform-origin:0 0;">test@test.ru</div>
<div class="t" style="left:888.00px;top:297.85px;font-size:8.85px;line-height:10.18px;font-weight:normal;color:#222;transform:scaleX(0.8929);transform-origin:0 0;">Y</div>
<div class="a" style="left:316.2px;top:322px;width:9px;height:9px;background:#fff;border:1px solid #707478;border-radius:0.5px"></div>
<svg class="a" style="left:317.8px;top:324px" width="6.5" height="5.5" viewBox="0 0 6.5 5.5"><path d="M0.5 2.8L2.4 4.7 5.9 0.6" fill="none" stroke="#111" stroke-width="1.6"/></svg>
<svg class="a" style="left:333px;top:323px" width="8" height="7" viewBox="0 0 8 7"><path d="M0 0.6h8M0 3.3h8M0 6h8" stroke="#84909a" stroke-width="1.25"/></svg>
<div class="t" style="left:349.50px;top:319.60px;font-size:8.85px;line-height:10.18px;font-weight:normal;color:#222;transform:scaleX(0.8929);transform-origin:0 0;">2</div>
<div class="t" style="left:459.70px;top:319.60px;font-size:8.85px;line-height:10.18px;font-weight:normal;color:#222;transform:scaleX(0.8929);transform-origin:0 0;">alex 2</div>
<div class="a" style="left:565px;top:316px;width:171.5px;height:19.5px;overflow:hidden">
<div class="t" style="left:4.50px;top:3.60px;font-size:8.85px;line-height:10.18px;font-weight:normal;color:#222;transform:scaleX(0.8929);transform-origin:0 0;">Vv7;S)5re5da77ba794523149a07adcf9c19486d2e</div>
</div>
<div class="t" style="left:741.00px;top:319.60px;font-size:8.85px;line-height:10.18px;font-weight:normal;color:#222;transform:scaleX(0.8929);transform-origin:0 0;">alex85@mail.ru</div>
<div class="t" style="left:888.00px;top:319.60px;font-size:8.85px;line-height:10.18px;font-weight:normal;color:#222;transform:scaleX(0.8929);transform-origin:0 0;">Y</div>
<div class="a" style="left:316.2px;top:343.5px;width:9px;height:9px;background:#fff;border:1px solid #707478;border-radius:0.5px"></div>
<svg class="a" style="left:317.8px;top:345.5px" width="6.5" height="5.5" viewBox="0 0 6.5 5.5"><path d="M0.5 2.8L2.4 4.7 5.9 0.6" fill="none" stroke="#111" stroke-width="1.6"/></svg>
<svg class="a" style="left:333px;top:344.5px" width="8" height="7" viewBox="0 0 8 7"><path d="M0 0.6h8M0 3.3h8M0 6h8" stroke="#84909a" stroke-width="1.25"/></svg>
<div class="t" style="left:349.50px;top:341.10px;font-size:8.85px;line-height:10.18px;font-weight:normal;color:#222;transform:scaleX(0.8929);transform-origin:0 0;">3</div>
<div class="t" style="left:459.70px;top:341.10px;font-size:8.85px;line-height:10.18px;font-weight:normal;color:#222;transform:scaleX(0.8929);transform-origin:0 0;">anastas 3</div>
<div class="a" style="left:565px;top:337.5px;width:171.5px;height:19.5px;overflow:hidden">
<div class="t" style="left:4.50px;top:3.60px;font-size:8.85px;line-height:10.18px;font-weight:normal;color:#222;transform:scaleX(0.8929);transform-origin:0 0;">Y6wGcYtO175e5b8201b0c3fdf72ca018bd7e53a4</div>
</div>
<div class="t" style="left:741.00px;top:341.10px;font-size:8.85px;line-height:10.18px;font-weight:normal;color:#222;transform:scaleX(0.8929);transform-origin:0 0;">anastas88@mail.ru</div>
<div class="t" style="left:888.00px;top:341.10px;font-size:8.85px;line-height:10.18px;font-weight:normal;color:#222;transform:scaleX(0.8929);transform-origin:0 0;">Y</div>
<div class="a" style="left:316.2px;top:365px;width:9px;height:9px;background:#fff;border:1px solid #707478;border-radius:0.5px"></div>
<svg class="a" style="left:317.8px;top:367px" width="6.5" height="5.5" viewBox="0 0 6.5 5.5"><path d="M0.5 2.8L2.4 4.7 5.9 0.6" fill="none" stroke="#111" stroke-width="1.6"/></svg>
<svg class="a" style="left:333px;top:366px" width="8" height="7" viewBox="0 0 8 7"><path d="M0 0.6h8M0 3.3h8M0 6h8" stroke="#84909a" stroke-width="1.25"/></svg>
<div class="t" style="left:349.50px;top:362.60px;font-size:8.85px;line-height:10.18px;font-weight:normal;color:#222;transform:scaleX(0.8929);transform-origin:0 0;">4</div>
<div class="t" style="left:459.70px;top:362.60px;font-size:8.85px;line-height:10.18px;font-weight:normal;color:#222;transform:scaleX(0.8929);transform-origin:0 0;">anonymous_9JriJ2Wh2 4</div>
<div class="a" style="left:565px;top:359px;width:171.5px;height:19.5px;overflow:hidden">
<div class="t" style="left:4.50px;top:3.60px;font-size:8.85px;line-height:10.18px;font-weight:normal;color:#222;transform:scaleX(0.8929);transform-origin:0 0;">DUrAPAlA481213309e869980ec1513bf83c144c2</div>
</div>
<div class="t" style="left:741.00px;top:362.60px;font-size:8.85px;line-height:10.18px;font-weight:normal;color:#222;transform:scaleX(0.8929);transform-origin:0 0;">anonymous_9JriJ2Wh2@example.com</div>
<div class="t" style="left:888.00px;top:362.60px;font-size:8.85px;line-height:10.18px;font-weight:normal;color:#222;transform:scaleX(0.8929);transform-origin:0 0;">N</div>
<div class="a" style="left:299px;top:436px;width:57px;height:21px;background:linear-gradient(#fbfcfc,#dfe5e8);border-radius:3px;box-shadow:0 1px 1px rgba(0,0,0,.25),0 0 0 1px rgba(0,0,0,.04)"></div>
<div class="t" style="left:308.00px;top:441.27px;font-size:9.80px;line-height:11.27px;font-weight:bold;color:#3a3f46;transform:scaleX(0.8929);transform-origin:0 0;">&lt;&lt; Назад</div>
<div class="a" style="left:361px;top:437px;width:112px;height:20px;background:linear-gradient(#8cbc1e,#6a9a0c);border-radius:3px;box-shadow:0 1px 1px rgba(0,0,0,.25)"></div>
<div class="t" style="left:370.00px;top:441.18px;font-size:9.90px;line-height:11.39px;font-weight:bold;color:#fff;transform:scaleX(0.8929);transform-origin:0 0;text-shadow:0 -1px 0 rgba(0,0,0,.15)">Загрузить данные &gt;&gt;</div>
<div class="a" style="left:849px;top:436.5px;width:133px;height:20.5px;background:linear-gradient(#fbfcfc,#dfe5e8);border-radius:3px;box-shadow:0 1px 1px rgba(0,0,0,.25),0 0 0 1px rgba(0,0,0,.04)"></div>
<div class="t" style="left:857.30px;top:441.15px;font-size:9.93px;line-height:11.42px;font-weight:bold;color:#3a3f46;transform:scaleX(0.8929);transform-origin:0 0;">Сохранить конфигурацию</div>
<svg class="a" style="left:991.5px;top:443px" width="7" height="11" viewBox="0 0 7 11"><rect x="1.5" y="0" width="4" height="1.5" fill="#9a9ea2"/><rect x="2" y="1" width="3" height="4.5" fill="#9a9ea2"/><rect x="0.3" y="5.3" width="6.4" height="1.6" fill="#9a9ea2"/><rect x="3" y="6.5" width="1" height="4.5" fill="#9a9ea2"/></svg>
</body></html>
